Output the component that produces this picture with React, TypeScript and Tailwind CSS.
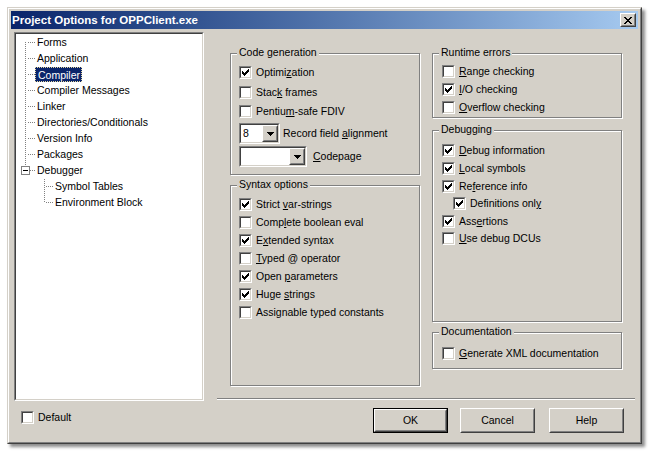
import React from "react";

const RAISED_OUT = "border border-t-white border-l-white border-b-[#404040] border-r-[#404040]";
const RAISED_IN = "border border-t-[#d4d0c8] border-l-[#d4d0c8] border-b-[#808080] border-r-[#808080]";
const SUNKEN_OUT = "border border-t-[#808080] border-l-[#808080] border-b-white border-r-white";
const SUNKEN_IN = "border border-t-[#404040] border-l-[#404040] border-b-[#d4d0c8] border-r-[#d4d0c8]";

const TREE = [
  { label: "Forms" },
  { label: "Application" },
  { label: "Compiler", selected: true },
  { label: "Compiler Messages" },
  { label: "Linker" },
  { label: "Directories/Conditionals" },
  { label: "Version Info" },
  { label: "Packages" },
  { label: "Debugger" },
  { label: "Symbol Tables", child: true },
  { label: "Environment Block", child: true },
];

// "&" marks the accelerator letter
function Mnemonic({ text }: { text: string }) {
  const i = text.indexOf("&");
  if (i < 0) return <>{text}</>;
  return (
    <>
      {text.slice(0, i)}
      <span className="underline underline-offset-[1px]">{text[i + 1]}</span>
      {text.slice(i + 2)}
    </>
  );
}

function CheckBox({ checked }: { checked?: boolean }) {
  return (
    <div className={`h-[13px] w-[13px] shrink-0 ${SUNKEN_OUT}`}>
      <div className={`flex h-full w-full items-center justify-center bg-white ${SUNKEN_IN}`}>
        {checked && (
          <svg width="7" height="7" viewBox="0 0 7 7" shapeRendering="crispEdges">
            <path
              d="M0 2h1v3H0zM1 3h1v3H1zM2 4h1v3H2zM3 3h1v3H3zM4 2h1v3H4zM5 1h1v3H5zM6 0h1v3H6z"
              fill="#000"
            />
          </svg>
        )}
      </div>
    </div>
  );
}

function CheckItem({
  label,
  checked,
  className = "",
}: {
  label: string;
  checked?: boolean;
  className?: string;
}) {
  return (
    <div className={`flex h-[13px] items-center gap-[4px] whitespace-nowrap ${className}`}>
      <CheckBox checked={checked} />
      <span>
        <Mnemonic text={label} />
      </span>
    </div>
  );
}

function DropArrow() {
  return (
    <svg width="7" height="4" viewBox="0 0 7 4" shapeRendering="crispEdges">
      <path d="M0 0h7v1H0zM1 1h5v1H1zM2 2h3v1H2zM3 3h1v1H3z" fill="#000" />
    </svg>
  );
}

function Combo({ value, width }: { value?: string; width: string }) {
  return (
    <div className={`h-[21px] shrink-0 ${width} ${SUNKEN_OUT}`}>
      <div className={`flex h-full w-full items-center bg-white ${SUNKEN_IN}`}>
        <span className="flex-1 pl-[2px]">{value}</span>
        <div className={`h-[17px] w-[16px] ${RAISED_OUT}`}>
          <div className={`flex h-full w-full items-center justify-center bg-[#d4d0c8] ${RAISED_IN}`}>
            <DropArrow />
          </div>
        </div>
      </div>
    </div>
  );
}

function GroupBox({
  title,
  className = "",
  children,
}: {
  title: string;
  className?: string;
  children: React.ReactNode;
}) {
  return (
    <div
      className={`relative border border-[#808080] shadow-[inset_1px_1px_0_#fff,1px_1px_0_#fff] ${className}`}
    >
      <span className="absolute left-[6px] top-[-8px] bg-[#d4d0c8] px-[2px] leading-[13px]">
        {title}
      </span>
      {children}
    </div>
  );
}

function PushButton({ label, isDefault }: { label: string; isDefault?: boolean }) {
  return (
    <div className={`h-[25px] w-[75px] ${isDefault ? "border border-black" : ""}`}>
      <div className={`h-full w-full ${RAISED_OUT}`}>
        <div className={`flex h-full w-full items-center justify-center ${RAISED_IN}`}>
          {label}
        </div>
      </div>
    </div>
  );
}

function TreeLines() {
  const roots = Array.from({ length: 9 }, (_, i) => 8 + i * 16);
  return (
    <svg
      className="pointer-events-none absolute left-0 top-0"
      width="186"
      height="200"
      shapeRendering="crispEdges"
    >
      <g stroke="#808080" strokeWidth="1" strokeDasharray="1 1">
        <line x1="9.5" y1="8" x2="9.5" y2="132" />
        {roots.map((y, i) => (
          <line key={y} x1={i === 8 ? 14 : 12} y1={y + 0.5} x2="20" y2={y + 0.5} />
        ))}
        <line x1="28.5" y1="145" x2="28.5" y2="168" />
        <line x1="30" y1="152.5" x2="38" y2="152.5" />
        <line x1="30" y1="168.5" x2="38" y2="168.5" />
      </g>
      <rect x="5.5" y="132.5" width="8" height="8" fill="#fff" stroke="#808080" />
      <line x1="7" y1="136.5" x2="12" y2="136.5" stroke="#000" />
    </svg>
  );
}

function Tree() {
  return (
    <div className={`h-[369px] w-[190px] ${SUNKEN_OUT}`}>
      <div className={`relative h-full w-full bg-white ${SUNKEN_IN}`}>
        <TreeLines />
        {TREE.map((item) => (
          <div
            key={item.label}
            className={`flex h-[16px] items-center ${item.child ? "pl-[37px]" : "pl-[19px]"}`}
          >
            <span
              className={`h-[15px] whitespace-nowrap pl-[2px] pr-[1px] leading-[15px] ${
                item.selected
                  ? "border border-dotted border-[#e8d9a0] bg-[#0a246a] pl-[1px] pr-0 leading-[13px] text-white"
                  : ""
              }`}
            >
              {item.label}
            </span>
          </div>
        ))}
      </div>
    </div>
  );
}

export default function App() {
  return (
    <div className="h-[451px] w-[650px] bg-white p-[7px] font-['Liberation_Sans',Arial,sans-serif] text-[10.5px] leading-[13px] text-black">
      <div
        className={`h-[437px] w-[635px] bg-[#d4d0c8] shadow-[3px_3px_3px_rgba(0,0,0,0.45)] border border-t-[#d4d0c8] border-l-[#d4d0c8] border-b-[#404040] border-r-[#404040]`}
      >
        <div className="h-full w-full border border-t-white border-l-white border-b-[#808080] border-r-[#808080] p-[2px]">
          <div className="flex h-[18px] items-center justify-between bg-linear-to-r from-[#0a246a] to-[#a6caf0] pl-[1px] pr-[2px]">
            <span className="text-[11.5px] font-bold text-white">Project Options for OPPClient.exe</span>
            <div className={`h-[14px] w-[16px] ${RAISED_OUT}`}>
              <div className={`flex h-full w-full items-center justify-center bg-[#d4d0c8] ${RAISED_IN}`}>
                <svg width="8" height="7" viewBox="0 0 8 7" shapeRendering="crispEdges">
                  <path
                    d="M0 0h2v1H0zM6 0h2v1H6zM1 1h2v1H1zM5 1h2v1H5zM2 2h4v1H2zM3 3h2v1H3zM2 4h4v1H2zM1 5h2v1H1zM5 5h2v1H5zM0 6h2v1H0zM6 6h2v1H6z"
                    fill="#000"
                  />
                </svg>
              </div>
            </div>
          </div>

          <div className="flex pl-[3px] pt-[3px]">
            <div className="flex w-[190px] flex-col">
              <Tree />
              <div className="ml-[7px] mt-[10px]">
                <CheckItem label="Default" />
              </div>
            </div>

            <div className="ml-[13px] flex w-[418px] flex-col">
              <div className="flex h-[366px] gap-[12px] pl-[13px] pt-[21px]">
                <div className="flex w-[190px] flex-col">
                  <GroupBox title="Code generation" className="h-[122px]">
                    <div className="flex flex-col pl-[8px] pt-[12px]">
                      <CheckItem label="Optimi&zation" checked />
                      <CheckItem label="Stac&k frames" className="mt-[7px]" />
                      <CheckItem label="Pentiu&m-safe FDIV" className="mt-[6px]" />
                      <div className="mt-[5px] flex items-center gap-[3px]">
                        <Combo value="8" width="w-[41px]" />
                        <span>
                          <Mnemonic text="Record field &alignment" />
                        </span>
                      </div>
                      <div className="mt-[2px] flex items-center gap-[6px]">
                        <Combo width="w-[68px]" />
                        <span>
                          <Mnemonic text="&Codepage" />
                        </span>
                      </div>
                    </div>
                  </GroupBox>
                  <GroupBox title="Syntax options" className="mt-[10px] h-[201px]">
                    <div className="flex flex-col gap-[5px] pl-[8px] pt-[12px]">
                      <CheckItem label="Strict &var-strings" checked />
                      <CheckItem label="Comp&lete boolean eval" />
                      <CheckItem label="E&xtended syntax" checked />
                      <CheckItem label="&Typed @ operator" />
                      <CheckItem label="Open &parameters" checked />
                      <CheckItem label="Huge &strings" checked />
                      <CheckItem label="Assignable typed constants" />
                    </div>
                  </GroupBox>
                </div>

                <div className="flex w-[190px] flex-col">
                  <GroupBox title="Runtime errors" className="h-[65px]">
                    <div className="flex flex-col gap-[5px] pl-[9px] pt-[11px]">
                      <CheckItem label="&Range checking" />
                      <CheckItem label="&I/O checking" checked />
                      <CheckItem label="&Overflow checking" />
                    </div>
                  </GroupBox>
                  <GroupBox title="Debugging" className="mt-[12px] h-[192px]">
                    <div className="flex flex-col pl-[9px] pt-[13px]">
                      <CheckItem label="&Debug information" checked />
                      <CheckItem label="&Local symbols" checked className="mt-[5px]" />
                      <CheckItem label="Re&ference info" checked className="mt-[5px]" />
                      <CheckItem label="Definitions onl&y" checked className="ml-[11px] mt-[4px]" />
                      <CheckItem label="Ass&ertions" checked className="mt-[5px]" />
                      <CheckItem label="&Use debug DCUs" className="mt-[4px]" />
                    </div>
                  </GroupBox>
                  <GroupBox title="Documentation" className="mt-[10px] h-[37px]">
                    <div className="pl-[9px] pt-[14px]">
                      <CheckItem label="&Generate XML documentation" />
                    </div>
                  </GroupBox>
                </div>
              </div>

              <div className="h-[2px] border-t border-b border-t-[#808080] border-b-white" />

              <div className="mt-[8px] flex justify-end pr-[11px]">
                <PushButton label="OK" isDefault />
                <div className="ml-[12px]">
                  <PushButton label="Cancel" />
                </div>
                <div className="ml-[14px]">
                  <PushButton label="Help" />
                </div>
              </div>
            </div>
          </div>
        </div>
      </div>
    </div>
  );
}
